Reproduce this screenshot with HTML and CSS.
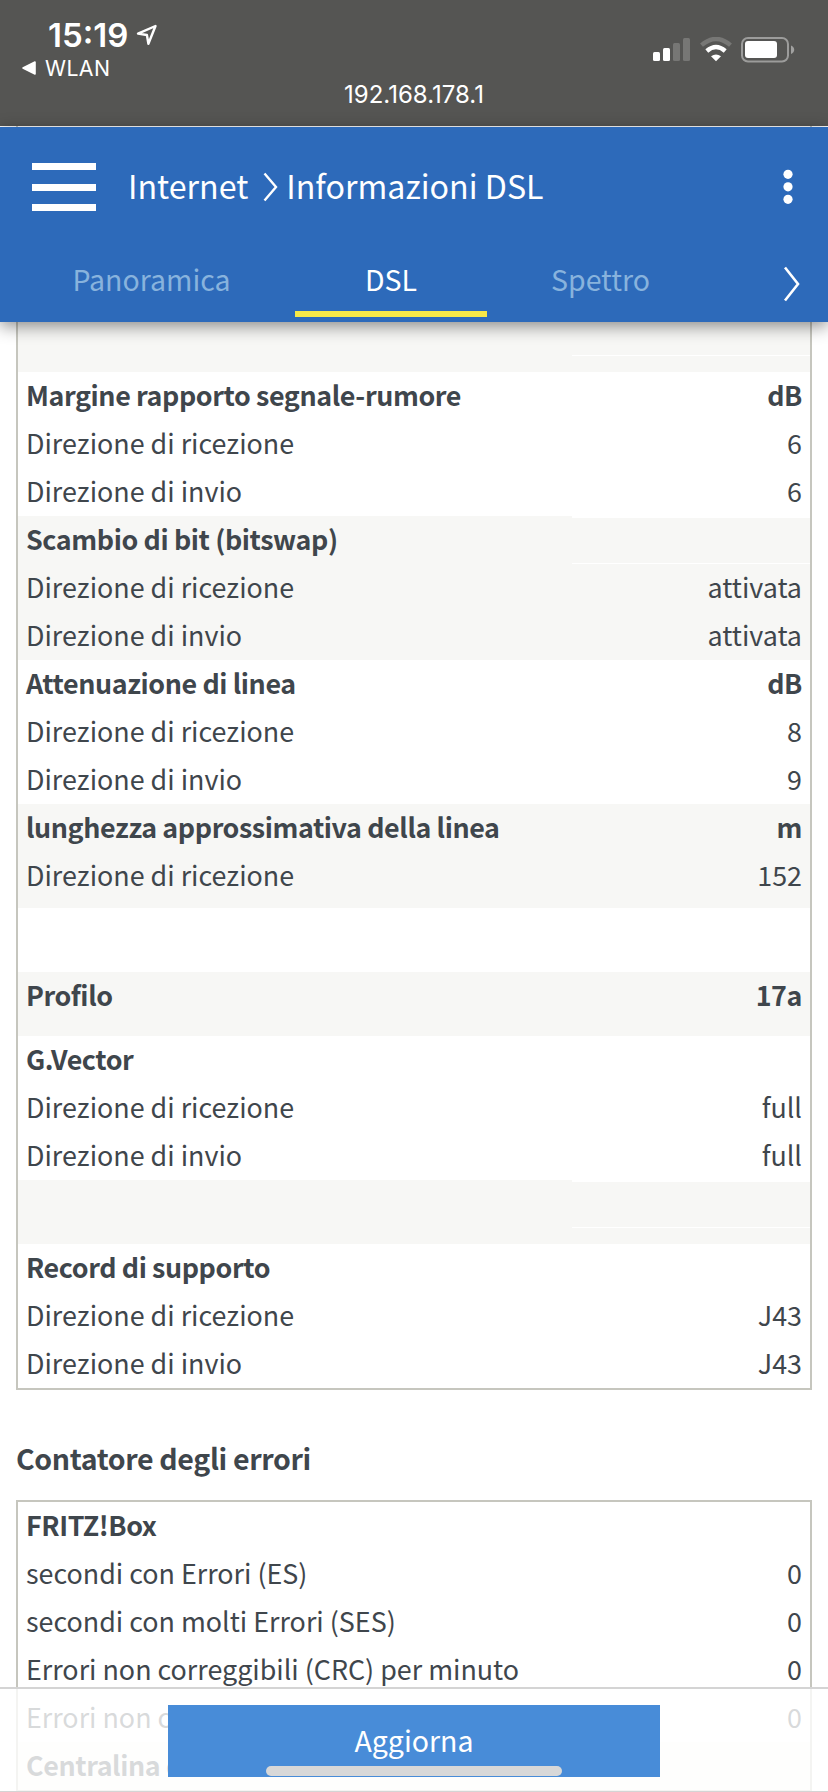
FILE: index.html
```
<!DOCTYPE html>
<html lang="it">
<head>
<meta charset="UTF-8">
<meta name="viewport" content="width=device-width, initial-scale=1.0">
<title>Informazioni DSL</title>
<link rel="stylesheet" href="styles.css">
</head>
<body>
<div class="status">
    <div class="status-left">
        <div class="clock">15:19
            <svg width="22" height="22" viewBox="0 0 22 22"><path d="M19.5 2 L2 9.6 L10.9 11 L12.4 19.8 Z" fill="none" stroke="#fff" stroke-width="2.4" stroke-linejoin="round"/></svg>
        </div>
        <div class="back">
            <svg width="14" height="14" viewBox="0 0 14 14"><path d="M1 7 L13 1 V13 Z" fill="#fff" stroke="#fff" stroke-width="1.6" stroke-linejoin="round"/></svg>
            WLAN
        </div>
    </div>
    <svg class="status-icons" width="142" height="26" viewBox="0 0 142 26">
        <g fill="#fff">
            <rect x="0" y="15" width="7" height="9" rx="1.5"/>
            <rect x="10" y="11" width="7" height="13" rx="1.5"/>
            <rect x="20" y="6" width="7" height="18" rx="1.5" opacity=".2"/>
            <rect x="30" y="1" width="7" height="23" rx="1.5" opacity=".2"/>
        </g>
        <g fill="none" stroke="#fff" stroke-width="4.4">
            <path d="M48.5 8.2 Q63 -4.2 77.5 8.2" opacity=".2"/>
            <path d="M53.8 14 Q63 6 72.2 14"/>
        </g>
        <path d="M58 19.3 Q63 15.5 68 19.3 L63 24.3 Z" fill="#fff"/>
        <rect x="89" y="1" width="46" height="23.5" rx="6" fill="none" stroke="#fff" stroke-width="2" opacity=".42"/>
        <rect x="92" y="4" width="32" height="17" rx="3" fill="#fff"/>
        <path d="M138 8.5 Q141.2 10 141.2 12.8 Q141.2 15.5 138 17 Z" fill="#fff" opacity=".45"/>
    </svg>
    <div class="address">192.168.178.1</div>
</div>
<div class="gap"></div>
<header>
    <div class="title-bar">
        <div class="burger"><i></i><i></i><i></i></div>
        <h1>
            <span>Internet</span>
            <svg width="16" height="30" viewBox="0 0 16 30"><path d="M1.5 1.5 L13 15 L1.5 28.5" fill="none" stroke="#fff" stroke-width="2.4"/></svg>
            <span>Informazioni DSL</span>
        </h1>
        <svg class="dots" width="10" height="36" viewBox="0 0 10 36"><g fill="#fff"><circle cx="5" cy="5.3" r="4.6"/><circle cx="5" cy="17.8" r="4.6"/><circle cx="5" cy="30.3" r="4.6"/></g></svg>
    </div>
    <nav>
        <a class="tab tab-wide">Panoramica</a>
        <a class="tab active">DSL</a>
        <a class="tab tab-mid">Spettro</a>
        <svg class="next" width="18" height="36" viewBox="0 0 18 36"><path d="M2 1.5 L15 18 L2 34.5" fill="none" stroke="#fff" stroke-width="2.6"/></svg>
    </nav>
</header>
<main>
    <div class="table first">
        <div class="group grey">
            <div class="row tall"><b></b><span class="blank"></span></div>
        </div>
        <div class="group">
            <div class="row head"><span>Margine rapporto segnale-rumore</span><span>dB</span></div>
            <div class="row"><span>Direzione di ricezione</span><span>6</span></div>
            <div class="row"><span>Direzione di invio</span><span>6</span></div>
        </div>
        <div class="group grey">
            <div class="row head"><span>Scambio di bit (bitswap)</span><span class="blank"></span></div>
            <div class="row"><span>Direzione di ricezione</span><span>attivata</span></div>
            <div class="row"><span>Direzione di invio</span><span>attivata</span></div>
        </div>
        <div class="group">
            <div class="row head"><span>Attenuazione di linea</span><span>dB</span></div>
            <div class="row"><span>Direzione di ricezione</span><span>8</span></div>
            <div class="row"><span>Direzione di invio</span><span>9</span></div>
        </div>
        <div class="group grey">
            <div class="row head"><span>lunghezza approssimativa della linea</span><span>m</span></div>
            <div class="row last"><span>Direzione di ricezione</span><span>152</span></div>
        </div>
        <div class="group">
            <div class="row tall"></div>
        </div>
        <div class="group grey">
            <div class="row head tall"><span>Profilo</span><span>17a</span></div>
        </div>
        <div class="group">
            <div class="row head"><span>G.Vector</span></div>
            <div class="row"><span>Direzione di ricezione</span><span>full</span></div>
            <div class="row"><span>Direzione di invio</span><span>full</span></div>
        </div>
        <div class="group grey">
            <div class="row tall"><b></b><span class="blank"></span></div>
        </div>
        <div class="group">
            <div class="row head"><span>Record di supporto</span></div>
            <div class="row"><span>Direzione di ricezione</span><span>J43</span></div>
            <div class="row"><span>Direzione di invio</span><span>J43</span></div>
        </div>
    </div>
    <h2>Contatore degli errori</h2>
    <div class="table second">
        <div class="group">
            <div class="row head"><span>FRITZ!Box</span></div>
            <div class="row"><span>secondi con Errori (ES)</span><span>0</span></div>
            <div class="row"><span>secondi con molti Errori (SES)</span><span>0</span></div>
            <div class="row"><span>Errori non correggibili (CRC) per minuto</span><span>0</span></div>
            <div class="row"><span>Errori non c</span><span>0</span></div>
        </div>
        <div class="group grey">
            <div class="row head"><span>Centralina d</span></div>
        </div>
    </div>
</main>
<footer>
    <button>Aggiorna</button>
    <div class="home"></div>
</footer>
</body>
</html>
```
FILE: styles.css
```
* {
    box-sizing: border-box;
}
body {
    margin: 0;
    height: 1792px;
    overflow: hidden;
    background-color: #fff;
    color: #3f464c;
    font-family: "Noto Sans CJK SC", "Open Sans", sans-serif;
    font-size: 26.86px;
}
svg {
    display: block;
    flex: none;
}
.status {
    display: flex;
    flex-wrap: wrap;
    justify-content: space-between;
    align-content: flex-start;
    height: 126px;
    padding: 19px 33px 0 22px;
    background-color: #555553;
    color: #fff;
    font-family: Inter, sans-serif;
}
.status-left {
    height: 63px;
}
.clock {
    display: flex;
    align-items: center;
    gap: 8px;
    height: 31px;
    padding-left: 26px;
    font-size: 33px;
    font-weight: 600;
}
.back {
    display: flex;
    align-items: center;
    gap: 9px;
    height: 36px;
    font-size: 21.3px;
    letter-spacing: 0.4px;
}
.status-icons {
    margin-top: 18px;
}
.address {
    width: 100%;
    padding-left: 11px;
    height: 26px;
    line-height: 26px;
    text-align: center;
    font-size: 24px;
}
.gap {
    height: 1px;
    margin: 0 16px;
    border: solid #c6c6be;
    border-width: 0 2px;
}
header {
    position: relative;
    z-index: 1;
    height: 195px;
    background-color: #2d6aba;
    box-shadow: 0 4px 16px rgba(0, 0, 0, 0.45);
    color: #fff;
}
.title-bar {
    display: flex;
    align-items: center;
    height: 120px;
    padding: 0 35px 0 32px;
}
.burger {
    width: 64px;
    height: 48px;
    display: flex;
    flex-direction: column;
    justify-content: space-between;
}
.burger i {
    height: 7px;
    background-color: #fff;
}
h1 {
    flex: 1;
    display: flex;
    align-items: center;
    margin: 0 0 0 32px;
    font-size: 32.2px;
    font-weight: 400;
    line-height: 44px;
}
h1 span {
    padding-bottom: 5px;
}
h1 svg {
    margin: 0 7px 0 15px;
}
nav {
    display: flex;
    height: 70px;
    padding-left: 8px;
}
.tab {
    width: 192px;
    line-height: 63px;
    text-align: center;
    color: #88b3dd;
    font-size: 28.5px;
}
.tab-wide {
    width: 287px;
}
.tab-mid {
    width: 227px;
}
.active {
    color: #fff;
    border-bottom: 6px solid #f7e948;
}
.next {
    margin: 19px 0 0 69px;
}
main {
    padding: 0 16px;
}
.table {
    border: 2px solid #c6c6be;
}
.first {
    margin-top: -14px;
    border-top: 0;
}
.grey {
    background-color: #f7f7f5;
}
.row {
    display: grid;
    grid-template-columns: 554px 1fr;
    height: 48px;
    line-height: 46px;
}
.row span {
    padding: 0 8px;
    white-space: nowrap;
}
.row span + span,
.row .blank {
    text-align: right;
}
.head {
    font-weight: 700;
    letter-spacing: -0.4px;
}
.tall {
    height: 64px;
}
.last {
    height: 56px;
}
.blank {
    height: 48px;
    border: solid #fff;
    border-width: 2px 0 1px;
}
h2 {
    height: 110px;
    margin: 0;
    padding-top: 44px;
    font-size: 28.5px;
    font-weight: 700;
    line-height: 48px;
    letter-spacing: -0.35px;
}
footer {
    position: fixed;
    left: 0;
    right: 0;
    bottom: 0;
    z-index: 2;
    height: 105px;
    padding-top: 16px;
    border-top: 2px solid #d4d4d4;
    border-bottom: 1px solid #d4d4d4;
    background-color: rgba(255, 255, 255, 0.8);
}
button {
    display: block;
    width: 492px;
    height: 72px;
    margin: 0 auto;
    padding: 0 0 3px;
    border: none;
    background-color: #488cd8;
    color: #fff;
    font-family: inherit;
    font-size: 28.5px;
}
.home {
    position: absolute;
    left: 266px;
    bottom: 15px;
    width: 296px;
    height: 10px;
    border-radius: 5px;
    background-color: #d8d8d8;
}
```
